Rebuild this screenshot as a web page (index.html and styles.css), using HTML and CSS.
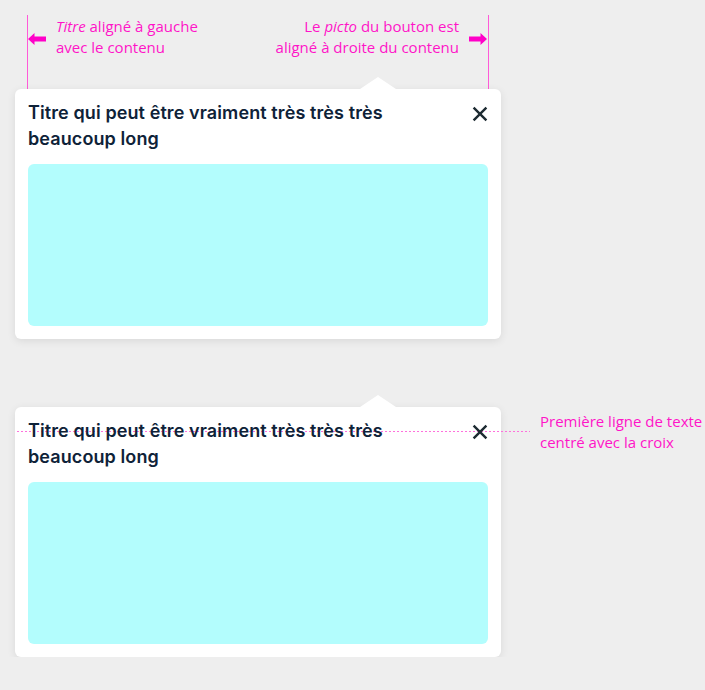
FILE: index.html
```html
<!DOCTYPE html>
<html lang="fr">
<head>
<meta charset="utf-8">
<title>Popover – alignements</title>
<link rel="stylesheet" href="styles.css">
</head>
<body>
<main class="page">
  <section class="demo demo-align">
    <span class="guide guide-left"></span>
    <span class="guide guide-right"></span>
    <div class="notes">
      <div class="note">
        <svg class="arrow" viewBox="0 0 18 12" width="18" height="12"><path d="M18 3.5H6.5V0L0 6l6.5 6V8.5H18z"/></svg>
        <p class="note-text"><em>Titre</em> aligné à gauche<br>avec le contenu</p>
      </div>
      <div class="note">
        <p class="note-text note-right">Le <em>picto</em> du bouton est<br>aligné à droite du contenu</p>
        <svg class="arrow" viewBox="0 0 18 12" width="18" height="12"><path d="M0 3.5h11.5V0L18 6l-6.5 6V8.5H0z"/></svg>
      </div>
    </div>
    <div class="popover">
      <div class="popover-head">
        <h2 class="popover-title">Titre qui peut être vraiment très très très beaucoup long</h2>
        <button class="close" type="button" aria-label="Fermer">
          <svg viewBox="0 0 16 16" width="16" height="16"><path d="M1.6 1.6 14.4 14.4M14.4 1.6 1.6 14.4"/></svg>
        </button>
      </div>
      <div class="popover-body"></div>
    </div>
  </section>

  <section class="demo demo-center">
    <div class="popover">
      <span class="baseline-guide"></span>
      <div class="popover-head">
        <h2 class="popover-title">Titre qui peut être vraiment très très très beaucoup long</h2>
        <button class="close" type="button" aria-label="Fermer">
          <svg viewBox="0 0 16 16" width="16" height="16"><path d="M1.6 1.6 14.4 14.4M14.4 1.6 1.6 14.4"/></svg>
        </button>
      </div>
      <div class="popover-body"></div>
    </div>
    <p class="note-text side-note">Première ligne de texte<br>centré avec la croix</p>
  </section>
</main>
</body>
</html>
```

FILE: styles.css
```css
* { box-sizing: border-box; }

html, body {
  margin: 0;
  background: #eeeeee;
  overflow: hidden;
}

body {
  font-family: "Open Sans", "Noto Sans", sans-serif;
}

.page {
  padding: 15px 0 0 15px;
}

.demo {
  position: relative;
  width: 486px;
}

.guide {
  position: absolute;
  top: 0;
  bottom: 0;
  width: 1px;
  background: #ff5ad8;
}
.guide-left { left: 12px; }
.guide-right { left: 473px; }

.notes {
  display: flex;
  justify-content: space-between;
  padding: 1px 14px 0 13px;
}

.note {
  display: flex;
  align-items: flex-start;
  gap: 10px;
}

.arrow {
  display: block;
  margin-top: 17px;
  fill: #ff00c8;
  flex: none;
}

.note-text {
  margin: 0;
  font-size: 15px;
  line-height: 21px;
  color: #ff14c8;
}
.note-right { text-align: right; }

.popover {
  position: relative;
  width: 486px;
  margin-top: 31px;
  padding: 11px 13px 13px;
  background: #ffffff;
  border-radius: 6px;
  box-shadow: 0 2px 8px rgba(0, 0, 0, 0.09);
}

.popover::before {
  content: "";
  position: absolute;
  top: -12px;
  left: 345px;
  width: 36px;
  height: 12px;
  background: #ffffff;
  clip-path: polygon(50% 0, 100% 100%, 0 100%);
}

.popover-head {
  position: relative;
  display: flex;
  align-items: flex-start;
  gap: 16px;
}

.popover-title {
  flex: 1;
  margin: 0;
  font-family: Inter, "Noto Sans", sans-serif;
  font-weight: 600;
  font-size: 18px;
  letter-spacing: 0.1px;
  line-height: 26px;
  color: #0e2238;
}

.close {
  flex: none;
  width: 16px;
  height: 16px;
  margin-top: 6px;
  padding: 0;
  border: 0;
  background: none;
}
.close svg {
  display: block;
  fill: none;
  stroke: #1d2b32;
  stroke-width: 2.4;
}

.popover-body {
  height: 162px;
  margin-top: 12px;
  background: #b3fdfd;
  border-radius: 6px;
}

.demo-center {
  display: flex;
  align-items: flex-start;
  gap: 39px;
  width: auto;
  margin-top: 68px;
}
.demo-center .popover {
  flex: none;
  margin-top: 0;
}

.baseline-guide {
  position: absolute;
  top: 24px;
  left: 2px;
  width: 513px;
  height: 1px;
  background: repeating-linear-gradient(90deg, #ff70dc 0 2px, transparent 2px 4px);
}

.side-note {
  flex: none;
  margin-top: 4px;
  white-space: nowrap;
}
```
